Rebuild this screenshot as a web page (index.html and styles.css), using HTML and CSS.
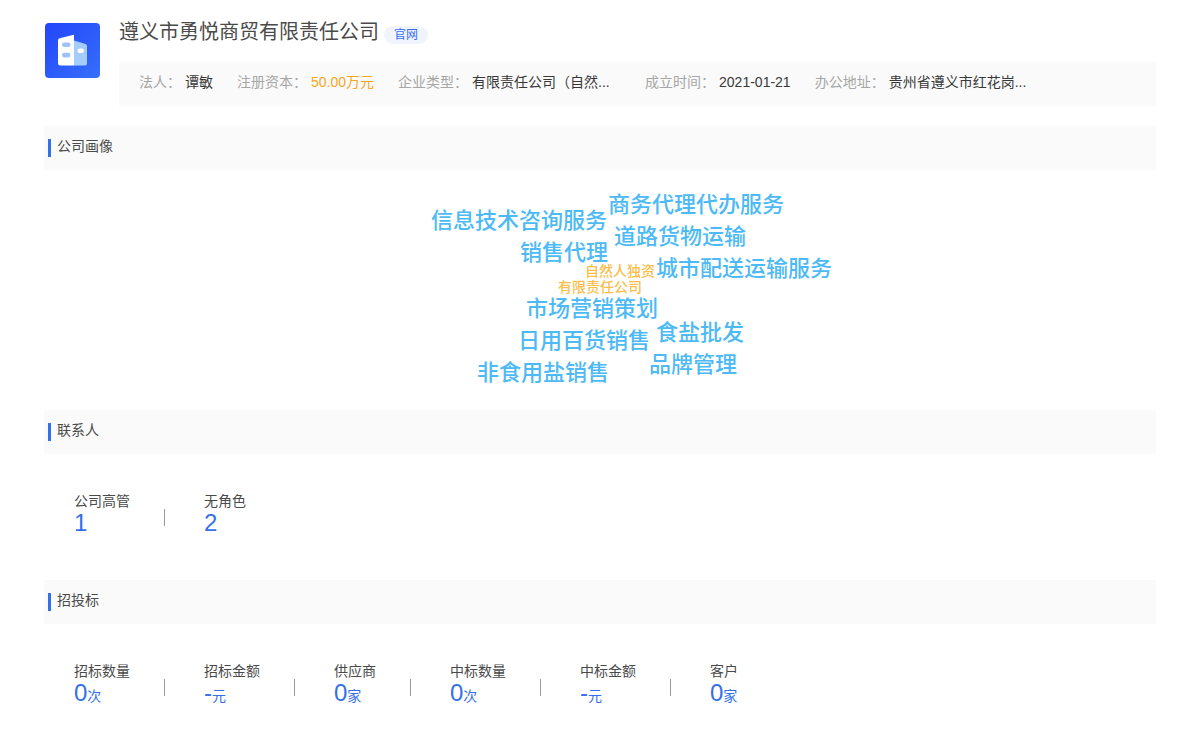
FILE: index.html
```html
<!DOCTYPE html>
<html lang="zh-CN">
<head>
<meta charset="utf-8">
<meta name="viewport" content="width=device-width, initial-scale=1">
<title>遵义市勇悦商贸有限责任公司</title>
<link rel="stylesheet" href="styles.css">
</head>
<body>
<main class="page">
  <header class="company">
    <svg class="logo" viewBox="0 0 55 55" aria-hidden="true">
      <defs>
        <linearGradient id="logo-bg" x1="0" y1="0" x2="1" y2="1">
          <stop offset="0" stop-color="#2345fb"/>
          <stop offset="1" stop-color="#366ffb"/>
        </linearGradient>
      </defs>
      <rect width="55" height="55" rx="4" fill="url(#logo-bg)"/>
      <path d="M29 17.500L40.500 21Q42 21.500 42 23V40.500Q42 42.500 40 42.500H29Z" fill="#a5cdfb"/>
      <path d="M14.500 15.300L29 11.800V42.500H15.500Q13 42.500 13 40V17.300Q13 15.700 14.500 15.300Z" fill="#fff"/>
      <rect x="17" y="19.500" width="8.500" height="4.600" rx="2.300" fill="#9dc2f6"/>
      <rect x="17" y="29.800" width="8.500" height="4.600" rx="2.300" fill="#9dc2f6"/>
      <rect x="32.500" y="25.500" width="6.500" height="4.600" rx="2.300" fill="#fff"/>
    </svg>
    <div class="company-main">
      <div class="title-row">
        <h1 class="title">遵义市勇悦商贸有限责任公司</h1>
        <a class="site-link" href="#">官网</a>
      </div>
      <dl class="facts">
        <div class="fact"><dt>法人：</dt><dd>谭敏</dd></div>
        <div class="fact"><dt>注册资本：</dt><dd class="money">50.00万元</dd></div>
        <div class="fact"><dt>企业类型：</dt><dd class="wide">有限责任公司（自然...</dd></div>
        <div class="fact"><dt>成立时间：</dt><dd>2021-01-21</dd></div>
        <div class="fact"><dt>办公地址：</dt><dd class="wide">贵州省遵义市红花岗...</dd></div>
      </dl>
    </div>
  </header>

  <section>
    <h2 class="section-title">公司画像</h2>
    <div class="cloud-area">
      <div class="cloud">
        <span class="word w1">商务代理代办服务</span>
        <span class="word w2">信息技术咨询服务</span>
        <span class="word w3">道路货物运输</span>
        <span class="word w4">销售代理</span>
        <span class="word w5">城市配送运输服务</span>
        <span class="word minor w6">自然人独资</span>
        <span class="word minor w7">有限责任公司</span>
        <span class="word w8">市场营销策划</span>
        <span class="word w9">食盐批发</span>
        <span class="word w10">日用百货销售</span>
        <span class="word w11">品牌管理</span>
        <span class="word w12">非食用盐销售</span>
      </div>
    </div>
  </section>

  <section>
    <h2 class="section-title">联系人</h2>
    <dl class="stats">
      <div class="stat"><dt>公司高管</dt><dd>1</dd></div>
      <div class="stat"><dt>无角色</dt><dd>2</dd></div>
    </dl>
  </section>

  <section>
    <h2 class="section-title">招投标</h2>
    <dl class="stats">
      <div class="stat"><dt>招标数量</dt><dd>0<small>次</small></dd></div>
      <div class="stat"><dt>招标金额</dt><dd>-<small>元</small></dd></div>
      <div class="stat"><dt>供应商</dt><dd>0<small>家</small></dd></div>
      <div class="stat"><dt>中标数量</dt><dd>0<small>次</small></dd></div>
      <div class="stat"><dt>中标金额</dt><dd>-<small>元</small></dd></div>
      <div class="stat"><dt>客户</dt><dd>0<small>家</small></dd></div>
    </dl>
  </section>
</main>
</body>
</html>
```
FILE: styles.css
```css
* {
  box-sizing: border-box;
}

body {
  margin: 0;
  background: #fff;
  color: #4a4a4a;
  font-family: "Liberation Sans", "Noto Sans CJK SC", sans-serif;
  font-size: 14px;
  line-height: 20px;
}

h1, h2, dl, dd {
  margin: 0;
  font-weight: 400;
}

.page {
  padding: 16px 44px 0;
}

.company {
  display: flex;
  gap: 19px;
  padding-left: 1px;
  margin-bottom: 20px;
}

.logo {
  flex: none;
  width: 55px;
  height: 55px;
  margin-top: 7px;
}

.company-main {
  flex: 1;
  min-width: 0;
}

.title-row {
  display: flex;
  align-items: flex-start;
  gap: 5px;
  height: 46px;
}

.title {
  font-size: 20px;
  line-height: 32px;
}

.site-link {
  margin-top: 10px;
  padding: 0 10px;
  border-radius: 9px;
  background: #eff4ff;
  color: #3a6cf0;
  font-size: 12px;
  line-height: 18px;
  text-decoration: none;
}

.facts {
  display: flex;
  gap: 24px;
  padding: 10px 20px 14px;
  background: #fafafa;
}

.fact {
  display: flex;
  gap: 4px;
  white-space: nowrap;
}

.fact dt {
  color: #a6a6a6;
}

.fact dd {
  color: #383838;
}

.fact .wide {
  width: 149px;
}

.fact .money {
  color: #f5a623;
}

.section-title {
  display: flex;
  align-items: center;
  gap: 6px;
  height: 44px;
  padding: 0 4px 4px;
  background: #fafafa;
  font-size: 14px;
  line-height: 20px;
}

.section-title::before {
  content: "";
  width: 3px;
  height: 18px;
  margin-top: 4px;
  background: #3370ea;
}

.cloud-area {
  display: flex;
  justify-content: center;
  height: 240px;
}

.cloud {
  position: relative;
  flex: none;
  width: 400px;
}

.word {
  position: absolute;
  color: #4dbaf5;
  font-size: 22px;
  font-weight: 500;
  line-height: 32px;
  white-space: nowrap;
}

.minor {
  color: #fabe4b;
  font-size: 14px;
  line-height: 16px;
}

.w1 { left: 208px; top: 19px; }
.w2 { left: 31px; top: 35px; }
.w3 { left: 214px; top: 51px; }
.w4 { left: 120px; top: 67px; }
.w5 { left: 256px; top: 83px; }
.w6 { left: 185px; top: 93px; }
.w7 { left: 158px; top: 109px; }
.w8 { left: 126px; top: 123px; }
.w9 { left: 256px; top: 147px; }
.w10 { left: 118px; top: 155px; }
.w11 { left: 249px; top: 179px; }
.w12 { left: 77px; top: 187px; }

.stats {
  display: flex;
  padding: 37px 30px 40px;
}

.stat {
  height: 49px;
}

.stat:not(:last-child) {
  padding-right: 35px;
  margin-right: 39px;
  background: linear-gradient(#999, #999) right 18px / 1px 17px no-repeat;
}

.stat dd {
  color: #3370ea;
  font-size: 24px;
  line-height: 24px;
}

.stat small {
  font-size: 14px;
}
```
